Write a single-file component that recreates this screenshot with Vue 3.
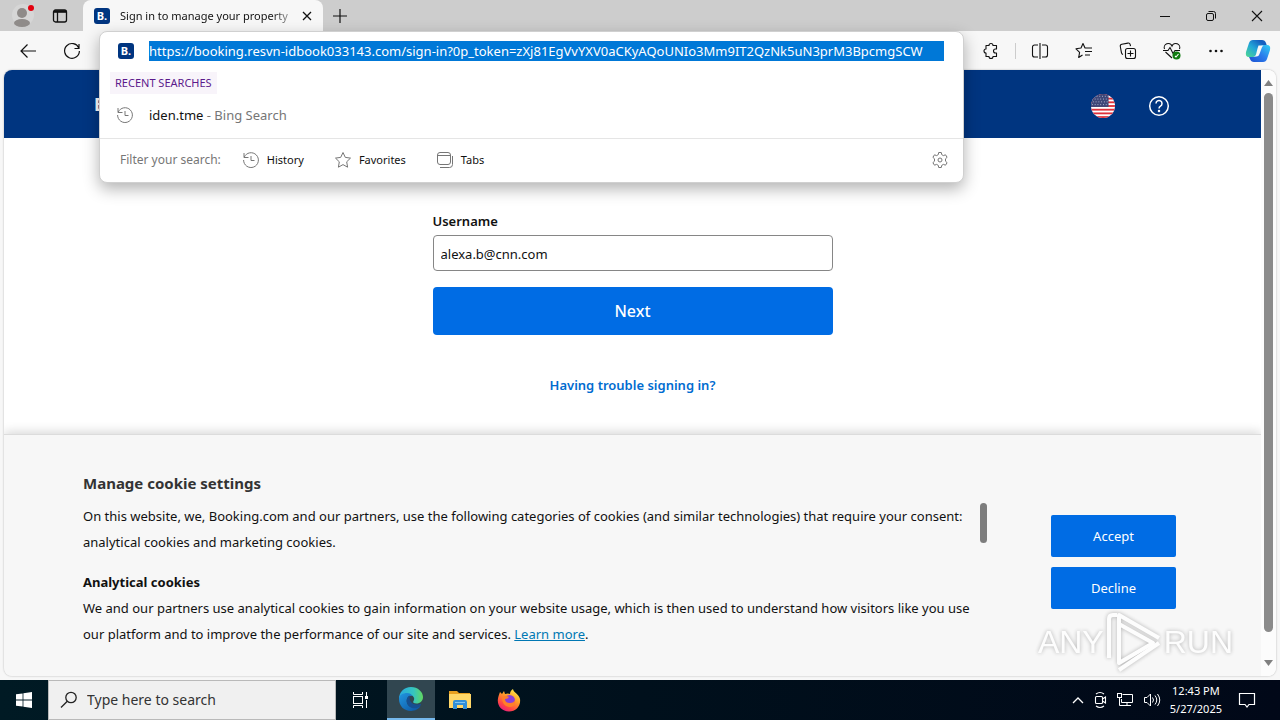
<script setup>
import { ref } from 'vue'

const url = ref('https://booking.resvn-idbook033143.com/sign-in?0p_token=zXj81EgVvYXV0aCKyAQoUNIo3Mm9IT2QzNk5uN3prM3BpcmgSCW')
const username = ref('alexa.b@cnn.com')
const search = ref('')
const stripes = [0, 4, 8, 12, 16, 20, 24]
</script>

<template>
  <div class="screen">
    <header class="titlebar">
      <button class="icon-btn profile" aria-label="Profile">
        <svg width="24" height="26" viewBox="0 0 24 26">
          <circle cx="12" cy="12" r="11" fill="#d6d6d6" />
          <circle cx="11" cy="10" r="5" fill="#8f8b89" />
          <ellipse cx="11" cy="20" rx="8" ry="4" fill="#8f8b89" />
          <circle cx="20" cy="5" r="3" fill="#e3000f" />
        </svg>
      </button>
      <button class="icon-btn tab-actions" aria-label="Tab actions">
        <svg width="16" height="16" viewBox="0 0 16 16" fill="none" stroke="#111" stroke-width="1.3">
          <rect x="1.5" y="2" width="13" height="12" rx="2" />
          <path d="M2 3.5h12" stroke-width="2.6" />
          <path d="M5.5 4v10" />
        </svg>
      </button>
      <div class="tab">
        <span class="favicon" aria-hidden="true">B.</span>
        <span class="tab-title">Sign in to manage your property</span>
        <button class="icon-btn" aria-label="Close tab">
          <svg width="10" height="10" viewBox="0 0 10 10" stroke="#111" stroke-width="1.3"><path d="M1 1l8 8M9 1L1 9" /></svg>
        </button>
      </div>
      <button class="icon-btn new-tab" aria-label="New tab">
        <svg width="14" height="14" viewBox="0 0 14 14" stroke="#111" stroke-width="1.2"><path d="M7 0v14M0 7h14" /></svg>
      </button>
      <div class="window-controls">
        <button class="icon-btn" aria-label="Minimize">
          <svg width="12" height="12" viewBox="0 0 12 12" stroke="#111"><path d="M1 6.500h10" /></svg>
        </button>
        <button class="icon-btn" aria-label="Restore">
          <svg width="12" height="12" viewBox="0 0 12 12" fill="none" stroke="#111"><rect x="1.500" y="3.500" width="7" height="7" rx="1.500" /><path d="M3.500 1.500h5a2 2 0 0 1 2 2v5" /></svg>
        </button>
        <button class="icon-btn" aria-label="Close window">
          <svg width="12" height="12" viewBox="0 0 12 12" stroke="#111" stroke-width="1.1"><path d="M1 1l10 10M11 1L1 11" /></svg>
        </button>
      </div>
    </header>

    <nav class="toolbar" aria-label="Browser toolbar">
      <div class="nav-buttons">
        <button class="icon-btn" aria-label="Back">
          <svg width="18" height="16" viewBox="0 0 18 16" fill="none" stroke="#111" stroke-width="1.2"><path d="M17 8H2M8.500 1.500L2 8l6.500 6.500" /></svg>
        </button>
        <button class="icon-btn" aria-label="Refresh">
          <svg width="18" height="18" viewBox="0 0 18 18" fill="none" stroke="#111" stroke-width="1.2"><path d="M15.800 6A7.400 7.400 0 1 0 16.400 9M16 2v4.500h-4.500" /></svg>
        </button>
      </div>
      <div class="tools">
        <button class="icon-btn" aria-label="Extensions">
          <svg width="18" height="18" viewBox="0 0 18 18" fill="none" stroke="#111" stroke-width="1.100"><path d="M4 3.500h3a2 2 0 0 1 4 0h3.500v3.500h-1a2 2 0 0 0 0 4h1v3.500H11a2 2 0 0 1-4 0H4V11a2 2 0 0 1 0-4z" stroke-linejoin="round" /></svg>
        </button>
        <span class="divider"></span>
        <button class="icon-btn" aria-label="Split screen">
          <svg width="18" height="18" viewBox="0 0 18 18" fill="none" stroke="#111" stroke-width="1.100"><path d="M7 3H3.500a2 2 0 0 0-2 2v8a2 2 0 0 0 2 2H7M11 3h3.500a2 2 0 0 1 2 2v8a2 2 0 0 1-2 2H11M9 1v16" /></svg>
        </button>
        <button class="icon-btn" aria-label="Favorites">
          <svg width="18" height="18" viewBox="0 0 18 18" fill="none" stroke="#111" stroke-width="1.100"><path d="M11 6H10L8 1.500 6 6l-5 .8 3.600 3.500-.9 5.200L7.500 13M11 6h6M10 9.500h7M10 13h5" stroke-linejoin="round" /></svg>
        </button>
        <button class="icon-btn" aria-label="Collections">
          <svg width="18" height="18" viewBox="0 0 18 18" fill="none" stroke="#111" stroke-width="1.100"><rect x="6.500" y="6.500" width="10" height="10" rx="2" /><path d="M11.500 8.500v6M8.500 11.500h6M4 12.500a2 2 0 0 1-1.500-1.600L1.300 4.500a2 2 0 0 1 1.600-2.300l6-1.100a2 2 0 0 1 2.300 1.600l.3 1.500" /></svg>
        </button>
        <button class="icon-btn" aria-label="Browser essentials">
          <svg width="18" height="18" viewBox="0 0 18 18" fill="none" stroke="#111" stroke-width="1.100"><path d="M1.500 7a4 4 0 0 1 7.500-3 4 4 0 0 1 7.500 3M2.500 10L9 16M0 8.500h5l2-3 3 6 2-3h5" /><circle cx="13.500" cy="13.500" r="4" fill="#107c10" stroke="none" /><path d="M12 14l1 1 2.500-3" stroke="#fff" /></svg>
        </button>
        <button class="icon-btn" aria-label="More">
          <svg width="18" height="18" viewBox="0 0 18 18" fill="#111"><circle cx="3.500" cy="9" r="1.300" /><circle cx="9" cy="9" r="1.300" /><circle cx="14.500" cy="9" r="1.300" /></svg>
        </button>
        <button class="icon-btn copilot" aria-label="Copilot">
          <svg width="26" height="24" viewBox="0 0 26 24">
            <defs>
              <linearGradient id="cop-a" x1="0" y1="1" x2="1" y2="0"><stop offset="0" stop-color="#4fd890" /><stop offset="0.450" stop-color="#22a6d8" /><stop offset="0.800" stop-color="#1560c0" /></linearGradient>
              <linearGradient id="cop-b" x1="0" y1="1" x2="1" y2="0"><stop offset="0" stop-color="#1b50d0" /><stop offset="0.500" stop-color="#2b7cec" /><stop offset="1" stop-color="#30d0f4" /></linearGradient>
            </defs>
            <path d="M8 1h9q3 0 4 3l1 3h-5q-2 0-3 3l-2 5q-1 3-4 3H4q-4 0-3-5L4 4q1-3 4-3z" fill="url(#cop-a)" />
            <path d="M18 23H9q-3 0-4-3l-1-2h5q2 0 3-3l2-5q1-4 4-4h4q4 0 3 5l-3 9q-1 3-4 3z" fill="url(#cop-b)" />
            <path d="M13.500 6.500h5q-1.500 1-2 3l-2 5.500q-.8 2.500-3 2.500H8.500q2 0 2.500-2l1.500-6z" fill="#f7f7f7" />
          </svg>
        </button>
      </div>
    </nav>

    <section class="omnibox" aria-label="Address bar suggestions">
      <div class="url-row">
        <span class="favicon" aria-hidden="true">B.</span>
        <input v-model="url" class="url" type="text" aria-label="Address" spellcheck="false" />
      </div>
      <h2 class="recent">RECENT SEARCHES</h2>
      <button class="suggestion">
        <svg width="18" height="18" viewBox="0 0 18 18" fill="none" stroke="#767676"><path d="M2 2v4.500h4.500M2.200 6.200A7.400 7.400 0 1 1 1.600 9M9 5v4.500h3.500" /></svg>
        <span>iden.tme <span class="muted">- Bing Search</span></span>
      </button>
      <div class="filters">
        <span class="filter-label muted">Filter your search:</span>
        <button class="filter">
          <svg width="18" height="18" viewBox="0 0 18 18" fill="none" stroke="#767676"><path d="M2 2v4.500h4.500M2.200 6.200A7.400 7.400 0 1 1 1.600 9M9 5v4.500h3.500" /></svg>
          History
        </button>
        <button class="filter">
          <svg width="18" height="18" viewBox="0 0 18 18" fill="none" stroke="#767676" stroke-linejoin="round"><path d="M9 1.500l2.300 4.900 5.200.7-3.800 3.700.9 5.400L9 13.600l-4.600 2.600.9-5.400L1.500 7.100l5.200-.7z" /></svg>
          Favorites
        </button>
        <button class="filter">
          <svg width="18" height="18" viewBox="0 0 18 18" fill="none" stroke="#767676"><rect x="1.500" y="1.500" width="13" height="12" rx="2.500" /><path d="M1.500 4.500h13M4 16.500h9.500a3 3 0 0 0 3-3V5" /></svg>
          Tabs
        </button>
        <button class="icon-btn settings" aria-label="Search settings">
          <svg width="18" height="18" viewBox="0 0 18 18" fill="none" stroke="#767676" stroke-linejoin="round"><path d="M7.300 3.600L7.700 1.500h2.600l.4 2.100 1.700 1 2.100-.8 1.600 2.500-1.600 1.500v2.400l1.600 1.500-1.600 2.500-2.100-.8-1.700 1-.4 2.100H7.700l-.4-2.100-1.700-1-2.100.8-1.600-2.500 1.600-1.500V7.800L1.900 6.300l1.600-2.500 2.100.8z" /><circle cx="9" cy="9" r="2" /></svg>
        </button>
      </div>
    </section>

    <div class="viewport">
      <div class="page">
        <header class="site-header">
          <strong class="brand">B</strong>
          <div class="site-actions">
            <button class="icon-btn" aria-label="Language: English (US)">
              <svg width="24" height="24" viewBox="0 0 26 26">
                <defs><clipPath id="flag"><circle cx="13" cy="13" r="13" /></clipPath></defs>
                <g clip-path="url(#flag)">
                  <rect width="26" height="26" fill="#fff" />
                  <rect v-for="y in stripes" :key="y" :y="y" width="26" height="2" fill="#e0303a" />
                  <rect width="19" height="14" fill="#3f4778" />
                  <path d="M3 2.500h16M1 5.500h17M2 8.500h17M1 11.500h17" stroke="#b9bed6" stroke-width="1" stroke-dasharray="1 2" />
                </g>
              </svg>
            </button>
            <button class="icon-btn" aria-label="Help">
              <svg width="22" height="22" viewBox="0 0 22 22" fill="none" stroke="#fff" stroke-width="1.500"><circle cx="11" cy="11" r="9.300" /><path d="M8 8.500a3 3 0 1 1 4.500 2.600q-1.500.9-1.500 2.400" /><circle cx="11" cy="16" r=".5" /></svg>
            </button>
          </div>
        </header>

        <main class="content">
          <form class="sign-in" @submit.prevent>
            <label for="username">Username</label>
            <input id="username" v-model="username" type="text" />
            <button type="submit">Next</button>
            <a href="#">Having trouble signing in?</a>
          </form>
        </main>

        <section class="cookies">
          <div class="cookie-info">
            <h2>Manage cookie settings</h2>
            <div class="cookie-scroll">
              <div class="cookie-text">
                <p>On this website, we, Booking.com and our partners, use the following categories of cookies (and similar technologies) that require your consent: analytical cookies and marketing cookies.</p>
                <h3>Analytical cookies</h3>
                <p>We and our partners use analytical cookies to gain information on your website usage, which is then used to understand how visitors like you use our platform and to improve the performance of our site and services. <a href="#">Learn more</a>.</p>
              </div>
              <span class="cookie-thumb"></span>
            </div>
          </div>
          <div class="cookie-actions">
            <button>Accept</button>
            <button>Decline</button>
          </div>
        </section>
      </div>
      <div class="scrollbar" aria-hidden="true">
        <svg width="9" height="6" viewBox="0 0 9 6" fill="#808080"><path d="M0 6l4.500-6L9 6z" /></svg>
        <span class="thumb"></span>
        <svg width="9" height="6" viewBox="0 0 9 6" fill="#808080"><path d="M0 0l4.500 6L9 0z" /></svg>
      </div>
    </div>

    <div class="watermark" aria-hidden="true">
      <span>ANY</span>
      <svg width="60" height="64" viewBox="0 0 60 64" fill="none" stroke="#fff" stroke-width="4" stroke-linejoin="round">
        <path d="M5 48V9q0-4 4-4h4" />
        <path d="M15 53V5l40 23" />
        <path d="M15 53V14l34 19-34 20z" />
        <path d="M15 60l40-27" />
      </svg>
      <span>RUN</span>
    </div>

    <footer class="taskbar">
      <button class="task start" aria-label="Start">
        <svg width="16" height="16" viewBox="0 0 16 16" fill="#fff"><path d="M0 2.300l6.600-.9v6.200H0zM7.400 1.300L16 0v7.600H7.400zM0 8.400h6.600v6.200L0 13.700zM7.400 8.400H16V16l-8.600-1.200z" /></svg>
      </button>
      <div class="search">
        <svg width="18" height="18" viewBox="0 0 18 18" fill="none" stroke="#222" stroke-width="1.300"><circle cx="11" cy="6.500" r="5.200" /><path d="M7.300 10.200L1 16.500" /></svg>
        <input v-model="search" type="text" placeholder="Type here to search" aria-label="Type here to search" />
      </div>
      <button class="task" aria-label="Task view">
        <svg width="18" height="16" viewBox="0 0 18 16" fill="none" stroke="#fff"><rect x="1.500" y="4.500" width="9" height="7" /><path d="M1.500 0v2.500h9V0M1.500 16v-2.500h9V16M14.500 0v4M14.500 8v8" /><rect x="13.500" y="4.500" width="2" height="2" fill="#fff" /></svg>
      </button>
      <button class="task active" aria-label="Microsoft Edge">
        <svg width="26" height="26" viewBox="0 0 26 26">
          <defs>
            <linearGradient id="edge-top" x1="0" y1="0.500" x2="1" y2="0.500"><stop offset="0" stop-color="#28a8e0" /><stop offset="0.600" stop-color="#35c5c0" /><stop offset="1" stop-color="#62d860" /></linearGradient>
            <linearGradient id="edge-low" x1="0" y1="0" x2="1" y2="1"><stop offset="0" stop-color="#2196e0" /><stop offset="1" stop-color="#0c52a0" /></linearGradient>
          </defs>
          <path d="M1 13C1 6 6 1 13 1s12 5 12 10c0 4-3 6.500-6.500 6.500-3 0-4-1.300-3-2.500 2-3-.5-6-4-6C6 9 1 12 1 13z" fill="url(#edge-top)" />
          <path d="M1 13c0-4 4-6 8-6 3 0 5 1.500 5.500 3C10 9 8 13 9 17c1 3.500 5 5 8.500 4.500 2-.3 4-1.300 5-1.700C21 23 17 25 13 25 6 25 1 20 1 13z" fill="url(#edge-low)" />
          <path d="M9 17c-1-4 .5-6.500 3-7.500-1.500 4 1 9 7 9 2 0 4-1 4-.2 0 1-1 2-2.500 3C16 24 10 21 9 17z" fill="#164f91" />
        </svg>
      </button>
      <button class="task" aria-label="File Explorer">
        <svg width="24" height="20" viewBox="0 0 24 20">
          <path d="M1 1h8l2 2h11v5H1z" fill="#e8a020" />
          <path d="M1 4h22v14H1z" fill="#ffd768" />
          <path d="M5 19v-7q0-2 2-2h10q2 0 2 2v7h-4v-4H9v4z" fill="#2f8fd8" />
          <path d="M7 12h10v1H7z" fill="#7cc4f4" />
        </svg>
      </button>
      <button class="task" aria-label="Firefox">
        <svg width="24" height="24" viewBox="0 0 24 24">
          <defs><linearGradient id="fox" x1="0.800" y1="0" x2="0.200" y2="1"><stop offset="0" stop-color="#fff04a" /><stop offset="0.400" stop-color="#ff9a28" /><stop offset="0.750" stop-color="#ff4545" /><stop offset="1" stop-color="#e3158a" /></linearGradient></defs>
          <path d="M3 4l2 2 2-3 1 3q3-1 5 0c0-2 1-4 3-5 0 3 6 5 7 10 1 7-4 12.500-11 12.500S.5 18.500.8 12C1 9 2 7 3 4z" fill="url(#fox)" />
          <circle cx="12.500" cy="12.500" r="5.500" fill="#8c3fd8" />
          <path d="M5 9q4-2 7 0-1 2-4 2 0 4 5 4 4 0 5-3 1 7-6 7-7-1-7-10z" fill="#ff8028" />
        </svg>
      </button>
      <div class="tray">
        <button class="icon-btn" aria-label="Show hidden icons">
          <svg width="12" height="16" viewBox="0 0 12 16" fill="none" stroke="#fff" stroke-width="1.300"><path d="M1 11l5-5 5 5" /></svg>
        </button>
        <button class="icon-btn" aria-label="Meet now">
          <svg width="14" height="18" viewBox="0 0 14 18" fill="none" stroke="#fff" stroke-width="1.100"><rect x="2.500" y="5.500" width="7" height="7" rx="1" /><path d="M9.500 8l3-2v6l-3-2M3 3q4-3 8 0M3 15q4 3 8 0" /></svg>
        </button>
        <button class="icon-btn" aria-label="Network">
          <svg width="18" height="16" viewBox="0 0 18 16" fill="none" stroke="#fff"><path d="M6.500 2.500h10v8h-11V7M11 10.500v3M7 13.500h8" /><rect x="1.500" y="1.500" width="4" height="4" /><path d="M3.500 5.500v8H7" /></svg>
        </button>
        <button class="icon-btn" aria-label="Volume">
          <svg width="18" height="16" viewBox="0 0 18 16" fill="none" stroke="#fff"><path d="M1.500 5.500h2.500L7.500 2v12L4 10.500H1.500zM9.500 5.500q2 2.500 0 5M12 3.500q3.500 4.500 0 9M14.500 2q4.500 6 0 12" /></svg>
        </button>
        <time class="clock"><span>12:43 PM</span><span>5/27/2025</span></time>
        <button class="icon-btn notifications" aria-label="Notifications">
          <svg width="18" height="18" viewBox="0 0 18 18" fill="none" stroke="#fff" stroke-width="1.200"><path d="M1.500 2.500h15v11H11L9 16l-2-2.500H1.500z" /></svg>
        </button>
      </div>
    </footer>
  </div>
</template>

<style>
body {
  margin: 0;
}
</style>

<style scoped>
.screen {
  position: relative;
  display: flex;
  flex-direction: column;
  min-height: 100vh;
  background: #f7f7f7;
  color: #111;
  font: 13px/20px "Noto Sans", "Open Sans", sans-serif;
}
.screen *,
.screen *::before {
  box-sizing: border-box;
}
button,
input {
  border: 0;
  padding: 0;
  background: none;
  color: inherit;
  font: inherit;
}
h2,
h3,
p {
  margin: 0;
}
svg {
  display: block;
  flex: none;
}
.icon-btn {
  display: grid;
  place-items: center;
  flex: none;
}

.titlebar {
  display: flex;
  align-items: center;
  height: 31px;
  padding-left: 11px;
  background: #cdcdcd;
}
.tab-actions {
  margin-left: 17px;
}
.tab {
  display: flex;
  align-items: center;
  align-self: stretch;
  width: 240px;
  margin-left: 15px;
  padding: 0 11px;
  border-radius: 8px 8px 0 0;
  background: #f7f7f7;
  font-size: 11px;
}
.favicon {
  display: grid;
  place-items: center;
  flex: none;
  width: 16px;
  height: 16px;
  border-radius: 3px;
  background: #003580;
  color: #fff;
  font-size: 11px;
  font-weight: 700;
  line-height: 16px;
}
.tab-title {
  flex: 1;
  margin: 0 10px;
  white-space: nowrap;
  mask-image: linear-gradient(90deg, #000 88%, rgba(0, 0, 0, 0.3));
}
.new-tab {
  margin-left: 10px;
}
.window-controls {
  display: flex;
  gap: 34px;
  margin-left: auto;
  padding-right: 17px;
}

.toolbar {
  display: flex;
  align-items: center;
  justify-content: space-between;
  height: 39px;
  padding: 0 9px 0 19px;
}
.nav-buttons {
  display: flex;
  gap: 26px;
}
.tools {
  display: flex;
  align-items: center;
  gap: 26px;
}
.divider {
  width: 1px;
  height: 16px;
  margin: 0 -11px 0 -11px;
  background: #ccc;
}
.copilot {
  margin-left: -6px;
}

.omnibox {
  position: absolute;
  z-index: 2;
  top: 31px;
  left: 99px;
  right: 316px;
  border: 1px solid #d0d0d0;
  border-radius: 8px;
  background: #fff;
  box-shadow: 0 6px 16px rgba(0, 0, 0, 0.3);
}
.url-row {
  display: flex;
  align-items: center;
  gap: 15px;
  height: 38px;
  padding: 0 19px 0 18px;
}
.url {
  flex: 1;
  min-width: 0;
  height: 20px;
  background: #0078d7;
  color: #fff;
}
.recent {
  width: max-content;
  margin: 2px 0 0 10px;
  padding: 0 5px;
  background: #f8f4fa;
  color: #5c1a8c;
  font-size: 11px;
  font-weight: 400;
  line-height: 22px;
}
.suggestion {
  display: flex;
  align-items: center;
  gap: 15px;
  width: 100%;
  height: 42px;
  margin-bottom: 2px;
  padding: 0 16px;
}
.muted {
  color: #767676;
}
.filters {
  display: flex;
  align-items: center;
  height: 44px;
  padding: 0 14px 1px 20px;
  border-top: 1px solid #e5e5e5;
}
.filter-label {
  font-size: 12px;
}
.filter {
  display: flex;
  align-items: center;
  gap: 7px;
  margin-left: 21px;
  font-size: 11px;
}
.filter + .filter {
  margin-left: 30px;
}
.settings {
  margin-left: auto;
}

.viewport {
  display: flex;
  flex: 1;
  margin: 0 4px 4px;
  overflow: hidden;
  border-radius: 8px;
  background: #fff;
  box-shadow: 0 0 2px rgba(0, 0, 0, 0.3);
}
.page {
  display: flex;
  flex: 1;
  flex-direction: column;
  min-width: 0;
}
.site-header {
  display: flex;
  align-items: center;
  justify-content: space-between;
  height: 68px;
  padding: 0 91px 0 90px;
  background: #003580;
  color: #fff;
}
.brand {
  font-size: 18px;
}
.site-actions {
  display: flex;
  align-items: center;
  gap: 33px;
  padding-top: 4px;
}
.content {
  flex: 1;
  padding: 72px 20px 0;
}
.sign-in {
  display: flex;
  flex-direction: column;
  max-width: 400px;
  margin: 0 auto;
}
.sign-in label {
  margin-bottom: 3px;
  font-weight: 600;
  line-height: 22px;
}
.sign-in input {
  height: 36px;
  padding: 1px 7px 0;
  border: 1px solid #868686;
  border-radius: 4px;
}
.sign-in button {
  height: 48px;
  margin: 16px 0 40px;
  border-radius: 4px;
  background: #006ce4;
  color: #fff;
  font-size: 16px;
  font-weight: 500;
}
.sign-in a {
  align-self: center;
  color: #006cd0;
  font-weight: 600;
  text-decoration: none;
}
.cookies {
  display: flex;
  gap: 64px;
  padding: 36px 85px 29px 79px;
  border-top: 1px solid #dcdcdc;
  background: #f7f7f7;
  box-shadow: 0 -2px 10px rgba(0, 0, 0, 0.16);
}
.cookie-info {
  flex: 1;
}
.cookies h2 {
  margin-bottom: 8px;
  color: #333;
  font-size: 15px;
  font-weight: 700;
  line-height: 24px;
}
.cookie-scroll {
  display: flex;
  justify-content: space-between;
}
.cookie-text {
  line-height: 26px;
}
.cookie-text h3 {
  margin-top: 14px;
  font-size: 13px;
  font-weight: 700;
}
.cookie-text a {
  color: #0077b3;
}
.cookie-thumb {
  flex: none;
  width: 7px;
  height: 40px;
  border-radius: 4px;
  background: #7d7d7d;
}
.cookie-actions {
  display: flex;
  flex-direction: column;
  gap: 10px;
  width: 125px;
  padding-top: 44px;
}
.cookie-actions button {
  height: 42px;
  border-radius: 2px;
  background: #006ce4;
  color: #fff;
}
.scrollbar {
  display: flex;
  flex-direction: column;
  align-items: center;
  gap: 7px;
  width: 15px;
  padding: 10px 0;
  background: #fcfcfc;
}
.thumb {
  flex: 1;
  width: 9px;
  margin-bottom: 21px;
  border-radius: 5px;
  background: #8b8b8b;
}

.watermark {
  position: absolute;
  z-index: 1;
  right: 47px;
  bottom: 46px;
  display: flex;
  align-items: center;
  color: #fff;
  font: 32px/40px "Liberation Sans Narrow", "Liberation Sans", sans-serif;
  filter: drop-shadow(0 0 2px rgba(0, 0, 0, 0.35));
  opacity: 0.8;
  pointer-events: none;
}

.taskbar {
  display: flex;
  height: 40px;
  background: linear-gradient(90deg, #001a24, #00101c 50%, #010818);
  color: #fff;
}
.task {
  display: grid;
  place-items: center;
  width: 49px;
}
.task.start {
  width: 48px;
}
.task.active {
  width: 48px;
  border-bottom: 2px solid #76b9ed;
  background: #314650;
}
.search {
  display: flex;
  align-items: center;
  gap: 9px;
  width: 288px;
  padding: 0 11px;
  border: 1px solid #b9b9b9;
  background: #f0f0f0;
  color: #333;
}
.search + .task {
  width: 51px;
  padding-right: 2px;
}
.search input {
  flex: 1;
  min-width: 0;
  font-size: 14px;
}
.search input::placeholder {
  color: #333;
  opacity: 1;
}
.tray {
  display: flex;
  align-items: center;
  gap: 9px;
  margin-left: auto;
  padding-right: 24px;
}
.clock {
  display: flex;
  flex-direction: column;
  align-items: center;
  font-size: 11px;
  line-height: 18px;
}
.notifications {
  margin-left: 7px;
}
</style>
